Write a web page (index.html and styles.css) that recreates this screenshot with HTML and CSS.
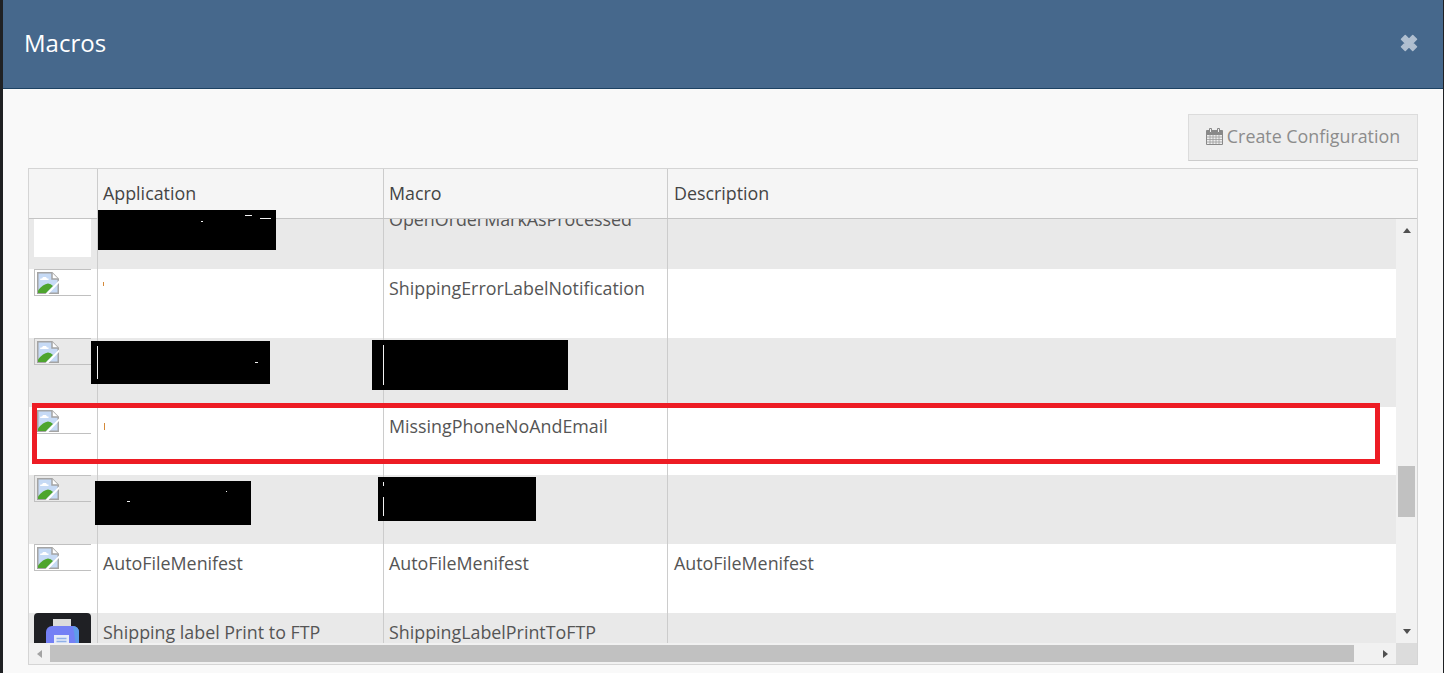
FILE: index.html
```html
<!DOCTYPE html>
<html lang="en">
<head>
<meta charset="utf-8">
<title>Macros</title>
<link rel="stylesheet" href="styles.css">
</head>
<body>
<svg class="defs" width="0" height="0" aria-hidden="true">
  <symbol id="broken" viewBox="0 0 22 22">
    <path d="M.75.75H15L21.25 7V21.25H.75Z" fill="#c6daf5" stroke="#a4a4a4" stroke-width="1.500"/>
    <path d="M15 .75V7H21.250" fill="#fff" stroke="#a4a4a4" stroke-width="1.500"/>
    <path d="M3.500 6.500h1.500l1-1.500h3l1 1.500h1.500v1.500h-8.500Z" fill="#fff"/>
    <path d="M1 21V18.500Q6 12 11 11.500Q14 11.500 16 14L9 21Z" fill="#4ea52e"/>
    <path d="M8.500 22L22 8.500V11L11.500 22Z" fill="#fff"/>
  </symbol>
</svg>
<div class="modal">
  <header class="modal-head">
    <h1 class="modal-title">Macros</h1>
    <svg class="close" viewBox="0 0 16 16" aria-hidden="true"><path d="M3 5.500 5.500 3 8 5.500 10.500 3 13 5.500 10.500 8 13 10.500 10.500 13 8 10.500 5.500 13 3 10.500 5.500 8Z" fill="#b0bfd0" stroke="#b0bfd0" stroke-width="1" stroke-linejoin="round"/></svg>
  </header>
  <main class="modal-body">
    <div class="toolbar">
      <button class="btn" type="button">
        <svg class="cal" viewBox="0 0 17 17" aria-hidden="true">
          <path d="M.5 3.500h16v13H.5Z" fill="#eee" stroke="#888"/>
          <path d="M.5 2.500h16v4H.5Z" fill="#888" stroke="#888"/>
          <path d="M3.500 .5h2v4h-2ZM11.500 .5h2v4h-2Z" fill="#eee" stroke="#888"/>
          <path d="M1 9h15M1 11.500h15M1 14h15M4 6.500V16M7 6.500V16M10 6.500V16M13 6.500V16" fill="none" stroke="#999" stroke-width=".8"/>
        </svg>
        Create Configuration
      </button>
    </div>
    <section class="grid-box">
      <div class="grid-head">
        <div class="hc"></div>
        <div class="hc">Application</div>
        <div class="hc">Macro</div>
        <div class="hc hc-last">Description</div>
      </div>
      <div class="grid-pane">
        <div class="viewport">
          <div class="rows">
            <div class="row alt">
              <div class="c c-img"><div class="blank"></div></div>
              <div class="c"></div>
              <div class="c">OpenOrderMarkAsProcessed</div>
              <div class="c"></div>
            </div>
            <div class="row">
              <div class="c c-img"><div class="thumb-box"><svg class="bi"><use href="#broken"/></svg></div></div>
              <div class="c"></div>
              <div class="c">ShippingErrorLabelNotification</div>
              <div class="c"></div>
            </div>
            <div class="row alt">
              <div class="c c-img"><div class="thumb-box"><svg class="bi"><use href="#broken"/></svg></div></div>
              <div class="c"></div>
              <div class="c"></div>
              <div class="c"></div>
            </div>
            <div class="row">
              <div class="c c-img"><div class="thumb-box"><svg class="bi"><use href="#broken"/></svg></div></div>
              <div class="c"></div>
              <div class="c">MissingPhoneNoAndEmail</div>
              <div class="c"></div>
            </div>
            <div class="row alt">
              <div class="c c-img"><div class="thumb-box"><svg class="bi"><use href="#broken"/></svg></div></div>
              <div class="c"></div>
              <div class="c"></div>
              <div class="c"></div>
            </div>
            <div class="row">
              <div class="c c-img"><div class="thumb-box"><svg class="bi"><use href="#broken"/></svg></div></div>
              <div class="c">AutoFileMenifest</div>
              <div class="c">AutoFileMenifest</div>
              <div class="c">AutoFileMenifest</div>
            </div>
            <div class="row alt">
              <div class="c c-img">
                <div class="print-tile">
                  <svg class="printer" viewBox="0 0 57 40" aria-hidden="true">
                    <rect x="19" y="6" width="18" height="9" fill="#dcdcdc"/>
                    <rect x="12" y="13" width="33" height="22" rx="6" fill="#7480f5"/>
                    <path d="M39 13h0a6 6 0 0 1 6 6v10a6 6 0 0 1-3 3Z" fill="#5f9bea"/>
                    <rect x="20" y="22" width="15" height="18" fill="#e6ebf8"/>
                    <path d="M22.500 25.500h10M22.500 28.500h10" stroke="#8fb0e8" stroke-width="1.500"/>
                  </svg>
                </div>
              </div>
              <div class="c">Shipping label Print to FTP</div>
              <div class="c">ShippingLabelPrintToFTP</div>
              <div class="c"></div>
            </div>
          </div>
        </div>
        <div class="vbar">
          <span class="arrow up"></span>
          <div class="vtrack"><span class="vthumb"></span></div>
          <span class="arrow down"></span>
        </div>
        <div class="hbar">
          <span class="arrow left"></span>
          <div class="htrack"><span class="hthumb"></span></div>
          <span class="arrow right"></span>
        </div>
        <div class="corner"></div>
      </div>
    </section>
  </main>
</div>
<div class="speck orange o1"></div>
<div class="speck orange o2"></div>
<div class="redact r1"><span class="speck w1a"></span><span class="speck w1b"></span><span class="speck w1c"></span></div>
<div class="redact r2"><span class="speck w2a"></span><span class="speck w2b"></span></div>
<div class="redact r3"><span class="speck w3a"></span></div>
<div class="redact r4"><span class="speck w4a"></span><span class="speck w4b"></span></div>
<div class="redact r5"><span class="speck w5a"></span><span class="speck w5b"></span></div>
<div class="highlight"></div>
</body>
</html>
```
FILE: styles.css
```css
* { box-sizing: border-box; }
html, body { margin: 0; height: 100%; overflow: hidden; }
body {
  position: relative;
  width: 1444px;
  height: 673px;
  background: #f9f9f9;
  font-family: "Open Sans", sans-serif;
  color: #555;
  border-left: 3px solid #1f2124;
  border-right: 1px solid #1f2124;
}
.defs { position: absolute; }
.modal { display: flex; flex-direction: column; height: 100%; }
.modal-head {
  height: 89px;
  background: #46688c;
  border-bottom: 1px solid #1d4263;
  display: flex;
  align-items: center;
  justify-content: space-between;
  padding: 0 24px 2px 21px;
}
.modal-title { margin: 0; font-size: 24px; font-weight: 400; color: #fff; line-height: 1.3; }
.close { width: 24px; height: 24px; margin-right: -2px; }
.modal-body { flex: 1; padding: 25px 25px 0; display: flex; flex-direction: column; }
.toolbar { display: flex; justify-content: flex-end; margin-bottom: 7px; }
.btn {
  width: 230px;
  height: 47px;
  background: #eee;
  border: 1px solid #dcdcdc;
  border-bottom-color: #ccc;
  font: 400 17.85px "Open Sans", sans-serif;
  color: #8c8c8c;
  display: flex;
  align-items: center;
  justify-content: center;
  gap: 4px;
  padding: 0 0 3px;
}
.cal { width: 17px; height: 17px; margin-top: 1px; }
.grid-box { width: 1390px; height: 497px; border: 1px solid #d5d5d5; background: #f5f5f5; }
.grid-head {
  height: 50px;
  display: grid;
  grid-template-columns: 69px 286px 284px 1fr;
  border-bottom: 1px solid #c4c4c4;
  font-size: 17.85px;
  color: #444;
}
.hc { border-right: 1px solid #ccc; padding: 12px 5px 0; }
.hc:nth-child(4) { padding-left: 6px; }
.hc-last { border-right: 0; }
.grid-pane {
  display: grid;
  grid-template-columns: 1fr 21px;
  grid-template-rows: 424px 21px;
}
.viewport { overflow: hidden; background: #fff; }
.rows { margin-top: -18.6px; }
.row {
  height: 68.75px;
  display: grid;
  grid-template-columns: 69px 286px 284px 1fr;
  background: #fff;
  font-size: 17.85px;
  line-height: 24px;
}
.row.alt { background: #e9e9e9; }
.c { border-right: 1px solid #ccc; padding: 7px 5px 0; white-space: nowrap; overflow: hidden; }
.c:nth-child(4) { padding-left: 6px; border-right: 0; }
.c-img { padding: 0 6px 0 5px; }
.blank { height: 57px; background: #fff; }
.thumb-box {
  height: 27px;
  border: 1px solid #c0c0c0;
  border-right: 0;
  padding: 2px 0 0 2px;
}
.bi { display: block; width: 22px; height: 22px; }
.print-tile { height: 69px; background: #1f2024; border-radius: 4px 4px 0 0; overflow: hidden; }
.printer { display: block; width: 57px; height: 40px; }
.vbar { background: #f1f1f1; display: flex; flex-direction: column; align-items: center; }
.vtrack { flex: 1; width: 100%; padding: 0 2px; }
.vthumb { display: block; height: 51px; margin-top: 233px; background: #c1c1c1; }
.hbar { background: #f1f1f1; display: flex; align-items: center; }
.htrack { flex: 1; height: 100%; padding: 2px 0; }
.hthumb { display: block; height: 17px; width: 1304px; background: #c1c1c1; }
.corner { background: #dcdcdc; }
.arrow { display: block; width: 0; height: 0; flex: none; border-style: solid; border-color: transparent; }
.arrow.up { border-width: 0 4.500px 5px; border-bottom-color: #505050; margin: 9px 0 0; }
.arrow.down { border-width: 5px 4.500px 0; border-top-color: #505050; margin: 0 0 9px; }
.arrow.left { border-width: 4.500px 5px 4.500px 0; border-right-color: #a3a3a3; margin: 0 8px 0 8px; }
.arrow.right { border-width: 4.500px 0 4.500px 5px; border-left-color: #505050; margin: 0 8px 0 0; }
.redact { position: absolute; background: #000; }
.r1 { left: 95px; top: 210px; width: 178px; height: 40px; }
.r2 { left: 88px; top: 341px; width: 179px; height: 43px; }
.r3 { left: 369px; top: 340px; width: 196px; height: 50px; }
.r4 { left: 92px; top: 481px; width: 156px; height: 44px; }
.r5 { left: 375px; top: 477px; width: 158px; height: 44px; }
.highlight { position: absolute; left: 29px; top: 403px; width: 1348px; height: 61px; border: 5px solid #ed1c24; }
.speck { position: absolute; display: block; background: #f2f2f2; }
.orange { background: #d58a3a; width: 1px; }
.o1 { left: 100px; top: 282px; height: 4px; }
.o2 { left: 101px; top: 423px; height: 7px; }
.w1a { left: 147px; top: 5px; width: 7px; height: 1px; }
.w1b { left: 162px; top: 8px; width: 11px; height: 1px; }
.w1c { left: 103px; top: 11px; width: 2px; height: 1px; }
.w2a { left: 6px; top: 5px; width: 1px; height: 33px; }
.w2b { left: 164px; top: 21px; width: 3px; height: 1px; }
.w3a { left: 11px; top: 5px; width: 1px; height: 40px; }
.w4a { left: 32px; top: 20px; width: 3px; height: 1px; }
.w4b { left: 131px; top: 10px; width: 1px; height: 1px; }
.w5a { left: 5px; top: 5px; width: 1px; height: 4px; }
.w5b { left: 5px; top: 20px; width: 1px; height: 19px; }
```
